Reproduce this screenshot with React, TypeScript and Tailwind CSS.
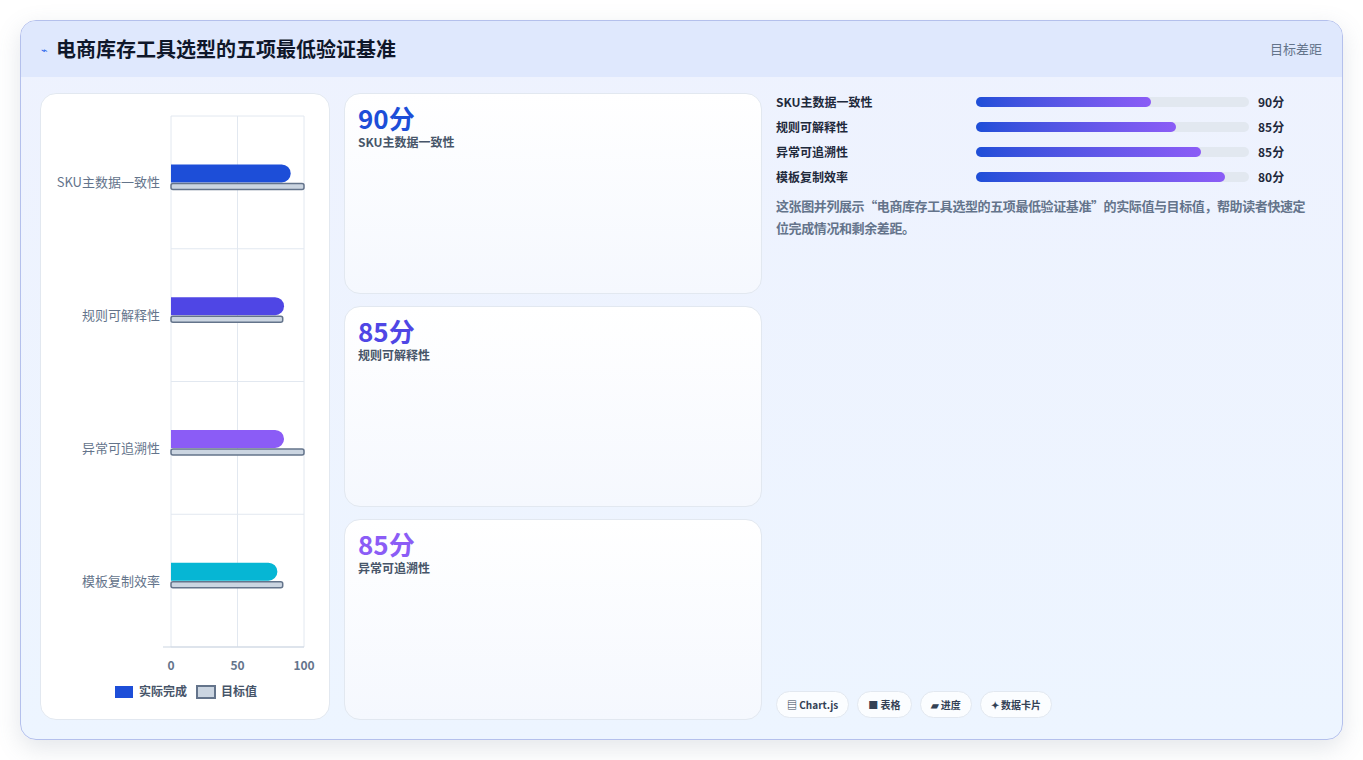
const font = { fontFamily: '"Noto Sans CJK SC", "Noto Sans", sans-serif' };

const rows = [
  { name: "SKU主数据一致性", actual: 90, target: 100, color: "#1d4ed8", fill: 175 },
  { name: "规则可解释性", actual: 85, target: 84, color: "#4f46e5", fill: 200 },
  { name: "异常可追溯性", actual: 85, target: 100, color: "#8b5cf6", fill: 225 },
  { name: "模板复制效率", actual: 80, target: 84, color: "#06b6d4", fill: 249 },
];

function Chart() {
  const x0 = 130;
  const w = 133;
  const top = 22;
  const band = 132.75;
  return (
    <svg width="290" height="627" className="block">
      {[0, 50, 100].map((v) => (
        <line key={v} x1={x0 + (w * v) / 100} x2={x0 + (w * v) / 100} y1={top} y2={553} stroke="#e2e8f0" />
      ))}
      {[0, 1, 2, 3, 4].map((i) => (
        <line key={i} x1={x0} x2={x0 + w} y1={top + band * i} y2={top + band * i} stroke="#e2e8f0" />
      ))}
      <line x1={x0 - 8} x2={x0 + w} y1={553} y2={553} stroke="#cbd5e1" />
      {rows.map((r, i) => {
        const cy = top + band * i + band / 2;
        const aw = (w * r.actual) / 100;
        const tw = (w * r.target) / 100;
        return (
          <g key={r.name}>
            <text x={x0 - 11} y={cy + 5} textAnchor="end" fontSize="13" fill="#64748b" style={font}>
              {r.name}
            </text>
            <path d={`M${x0} ${cy - 18} H${x0 + aw - 9} a9 9 0 0 1 0 18 H${x0} Z`} fill={r.color} />
            <rect x={x0} y={cy + 1} width={tw} height={6} rx="2" fill="#cbd5e1" stroke="#64748b" strokeWidth="1.5" />
          </g>
        );
      })}
      {[0, 50, 100].map((v) => (
        <text key={v} x={x0 + (w * v) / 100} y={576} textAnchor="middle" fontSize="12" fontWeight="700" fill="#64748b" style={font}>
          {v}
        </text>
      ))}
      <rect x={74} y={592} width={18} height={12} fill="#1d4ed8" />
      <text x={98} y={602} fontSize="12" fontWeight="700" fill="#475569" style={font}>实际完成</text>
      <rect x={156} y={592} width={18} height={12} fill="#cbd5e1" stroke="#64748b" strokeWidth="2" />
      <text x={180} y={602} fontSize="12" fontWeight="700" fill="#475569" style={font}>目标值</text>
    </svg>
  );
}

export default function App() {
  return (
    <div className="min-h-screen bg-white p-5" style={font}>
      <div className="h-[720px] overflow-hidden rounded-2xl border border-[#b4c0ec] bg-gradient-to-b from-[#eef2fe] to-[#edf5ff] shadow-[0_8px_24px_rgba(100,116,139,0.18)]">
        <header className="flex h-14 items-center justify-between bg-[#dfe8fd] px-5">
          <div className="flex items-center gap-2">
            <span className="text-[11px] text-[#2563eb]">⌁</span>
            <h1 className="text-[20px] font-bold text-[#0f172a]">电商库存工具选型的五项最低验证基准</h1>
          </div>
          <span className="text-[13px] text-[#64748b]">目标差距</span>
        </header>
        <div className="flex gap-[14px] px-[19px] pt-[16px]">
          <div className="h-[627px] w-[290px] shrink-0 rounded-2xl border border-[#e2e8f0] bg-white">
            <Chart />
          </div>
          <div className="flex w-[418px] shrink-0 flex-col gap-3">
            {rows.slice(0, 3).map((r) => (
              <div key={r.name} className="h-[201px] rounded-2xl border border-[#e2e8f0] bg-gradient-to-b from-white to-[#f5f8fe] px-[13px] pt-2">
                <div className="text-[26px] font-bold leading-8" style={{ color: r.color }}>{r.actual}分</div>
                <div className="text-xs font-bold text-[#475569]">{r.name}</div>
              </div>
            ))}
          </div>
          <div className="flex h-[627px] flex-1 flex-col">
            <div className="flex flex-col gap-[7px]">
              {rows.map((r) => (
                <div key={r.name} className="flex h-[18px] items-center">
                  <span className="w-[200px] text-xs font-bold text-[#1e293b]">{r.name}</span>
                  <div className="h-[10px] w-[273px] rounded-full bg-[#e2e8f0]">
                    <div className="h-full rounded-full bg-gradient-to-r from-[#1d4ed8] to-[#8b5cf6]" style={{ width: r.fill }} />
                  </div>
                  <span className="ml-[9px] text-xs font-bold text-[#1e293b]">{r.actual}分</span>
                </div>
              ))}
            </div>
            <p className="mt-[9px] pr-2 text-[13px] font-bold leading-[22px] tracking-[-0.4px] text-[#64748b]">
              这张图并列展示“电商库存工具选型的五项最低验证基准”的实际值与目标值，帮助读者快速定位完成情况和剩余差距。
            </p>
            <div className="mt-auto mb-[2px] flex gap-2">
              {["▤ Chart.js", "■ 表格", "▰ 进度", "✦ 数据卡片"].map((t) => (
                <span key={t} className="rounded-full border border-[#e2e8f0] bg-white/80 px-[10px] py-[5px] text-[10px] font-bold text-[#334155]">
                  {t}
                </span>
              ))}
            </div>
          </div>
        </div>
      </div>
    </div>
  );
}
